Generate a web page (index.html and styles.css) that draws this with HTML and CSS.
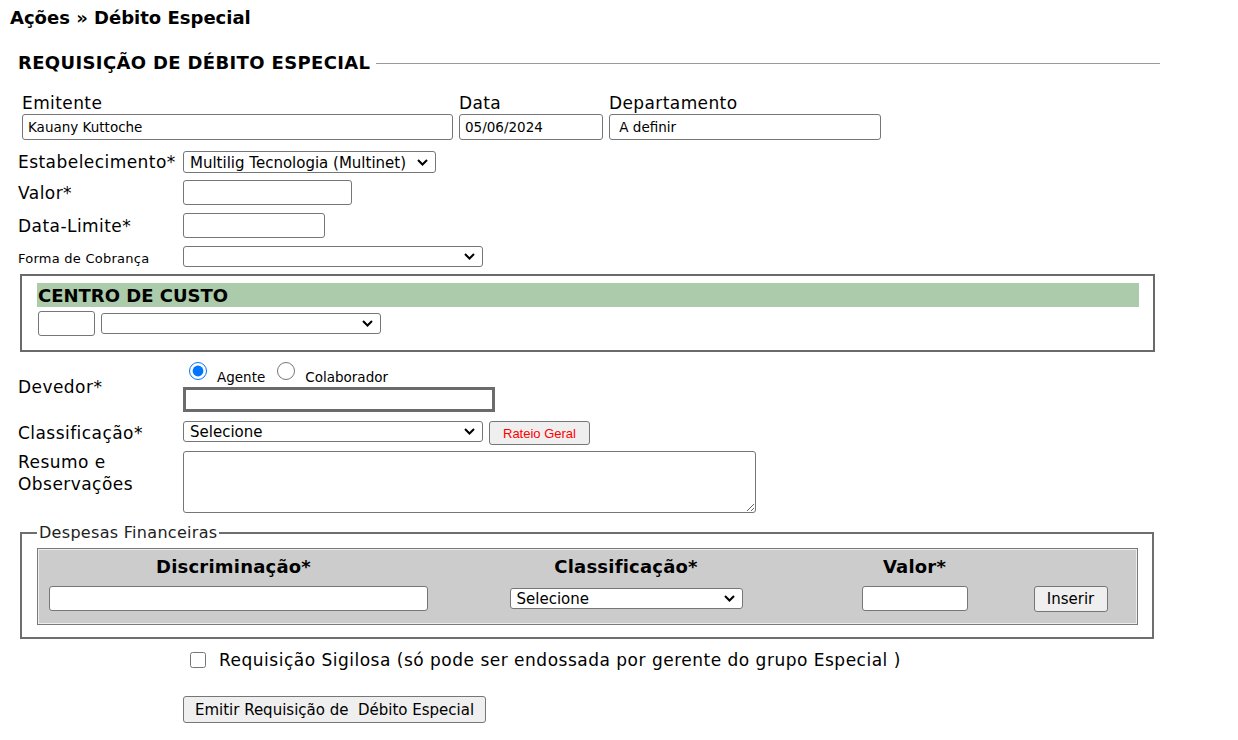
FILE: index.html
```html
<!DOCTYPE html>
<html lang="pt-BR">
<head>
    <meta charset="UTF-8">
    <title>Débito Especial</title>
    <link rel="stylesheet" href="styles.css">
</head>
<body>
    <h1 class="crumb">Ações » Débito Especial</h1>

    <form class="req">
        <div class="title-row">
            <h2>REQUISIÇÃO DE DÉBITO ESPECIAL</h2>
            <span class="rule"></span>
        </div>

        <div class="top-fields">
            <label class="field">
                <span>Emitente</span>
                <input type="text" class="in-emit" value="Kauany Kuttoche">
            </label>
            <label class="field">
                <span>Data</span>
                <input type="text" class="in-data" value="05/06/2024">
            </label>
            <label class="field">
                <span>Departamento</span>
                <input type="text" class="in-dep" value=" A definir">
            </label>
        </div>

        <div class="row row-estab">
            <span class="lbl">Estabelecimento*</span>
            <select class="sel sel-estab"><option>Multilig Tecnologia (Multinet)</option></select>
        </div>
        <div class="row row-valor">
            <span class="lbl">Valor*</span>
            <input type="text" class="in in-valor">
        </div>
        <div class="row row-dlim">
            <span class="lbl">Data-Limite*</span>
            <input type="text" class="in in-dlim">
        </div>
        <div class="row row-forma">
            <span class="lbl lbl-small">Forma de Cobrança</span>
            <select class="sel sel-forma"><option></option></select>
        </div>

        <div class="centro">
            <div class="centro-head">CENTRO DE CUSTO</div>
            <div class="centro-fields">
                <input type="text" class="in in-cc">
                <select class="sel sel-cc"><option></option></select>
            </div>
        </div>

        <div class="row row-devedor">
            <span class="lbl">Devedor*</span>
            <div class="devedor-box">
                <div class="radios">
                    <label><input type="radio" name="dev" checked> Agente</label>
                    <label><input type="radio" name="dev"> Colaborador</label>
                </div>
                <input type="text" class="in-devedor">
            </div>
        </div>

        <div class="row row-classif">
            <span class="lbl">Classificação*</span>
            <select class="sel sel-classif"><option>Selecione</option></select>
            <button type="button" class="btn-rateio">Rateio Geral</button>
        </div>

        <div class="row row-resumo">
            <span class="lbl">Resumo e<br>Observações</span>
            <textarea class="ta-resumo"></textarea>
        </div>

        <fieldset class="despesas">
            <legend>Despesas Financeiras</legend>
            <div class="desp-table">
                <div class="th">Discriminação*</div>
                <div class="th">Classificação*</div>
                <div class="th">Valor*</div>
                <div class="th"></div>
                <div class="td td-left"><input type="text" class="in in-disc"></div>
                <div class="td"><select class="sel sel-dclass"><option>Selecione</option></select></div>
                <div class="td"><input type="text" class="in in-dvalor"></div>
                <div class="td"><button type="button" class="btn btn-inserir">Inserir</button></div>
            </div>
        </fieldset>

        <div class="row row-sigilo">
            <span class="lbl"></span>
            <label class="sigilo"><input type="checkbox"> Requisição Sigilosa (só pode ser endossada por gerente do grupo Especial )</label>
        </div>

        <div class="row row-emitir">
            <span class="lbl"></span>
            <button type="button" class="btn btn-emitir">Emitir Requisição de &nbsp;Débito Especial</button>
        </div>
    </form>
</body>
</html>
```

FILE: styles.css
```css
body {
    margin: 0;
    padding: 8px 10px;
    font-family: 'DejaVu Sans', Verdana, sans-serif;
    color: #000;
    background: #fff;
}
.crumb {
    margin: 0;
    font-size: 18px;
    line-height: 20px;
    font-weight: bold;
}
.req {
    width: 1142px;
    margin-left: 8px;
}
.title-row {
    display: flex;
    align-items: center;
    margin-top: 25px;
    height: 20px;
}
.title-row h2 {
    margin: 0;
    font-size: 18px;
    line-height: 20px;
    font-weight: bold;
    letter-spacing: 0.35px;
    white-space: nowrap;
}
.rule {
    flex: 1;
    height: 1px;
    margin-left: 6px;
    background: #999;
}
.top-fields {
    display: flex;
    gap: 6px;
    margin-top: 20px;
    margin-left: 4px;
}
.field {
    display: flex;
    flex-direction: column;
    font-size: 17px;
    letter-spacing: 0.4px;
    line-height: 20px;
}
.field input {
    height: 26px;
    box-sizing: border-box;
    margin-top: 1px;
    padding: 0 5px;
    font-family: inherit;
    font-size: 13.5px;
    letter-spacing: 0;
    border: 1px solid #767676;
    border-radius: 3px;
}
.in-emit { width: 431px; }
.in-data { width: 144px; }
.in-dep { width: 272px; }

.row {
    display: flex;
    align-items: center;
}
.lbl {
    width: 165px;
    flex: none;
    font-size: 17px;
    letter-spacing: 0.45px;
    line-height: 22px;
}
.lbl-small {
    font-size: 13px;
    letter-spacing: 0.25px;
    padding-top: 5px;
}
.in, .sel {
    box-sizing: border-box;
    font-family: inherit;
    border: 1px solid #767676;
    border-radius: 3px;
    background-color: #fff;
    margin: 0;
}
.in {
    height: 25px;
    padding: 0 5px;
    font-size: 13px;
}
.sel {
    -webkit-appearance: none;
    appearance: none;
    height: 21px;
    padding: 2px 22px 0 6px;
    font-size: 15px;
    line-height: 17px;
    color: #000;
    background-image: url("data:image/svg+xml,%3Csvg xmlns='http://www.w3.org/2000/svg' width='11' height='7' viewBox='0 0 11 7'%3E%3Cpath d='M1 1l4.5 4.5L10 1' fill='none' stroke='%23000' stroke-width='2'/%3E%3C/svg%3E");
    background-repeat: no-repeat;
    background-position: right 7px center;
}
.row-estab { margin-top: 11px; height: 22px; }
.sel-estab { width: 253px; height: 22px; }
.row-valor { margin-top: 7px; height: 25px; }
.in-valor { width: 169px; }
.row-dlim { margin-top: 8px; height: 25px; }
.in-dlim { width: 142px; }
.row-forma { margin-top: 7px; height: 22px; }
.sel-forma { width: 300px; }

.centro {
    box-sizing: border-box;
    width: 1135px;
    height: 78px;
    margin: 7px 0 0 2px;
    padding: 7px 14px 0 15px;
    border: 2px solid #6a6a6a;
}
.centro-head {
    background: #abcbaa;
    height: 24px;
    line-height: 26px;
    font-size: 18px;
    font-weight: bold;
    padding-left: 1px;
}
.centro-fields {
    display: flex;
    align-items: center;
    gap: 6px;
    margin-top: 4px;
    padding-left: 1px;
}
.in-cc { width: 57px; }
.sel-cc { width: 280px; }

.row-devedor { margin-top: 10px; height: 50px; }
.devedor-box {
    display: flex;
    flex-direction: column;
}
.radios {
    display: flex;
    gap: 12px;
    height: 25px;
    align-items: center;
    font-size: 13.5px;
    margin-left: 6px;
    padding-top: 5px;
    box-sizing: border-box;
}
.radios label {
    display: flex;
    align-items: center;
    gap: 2px;
}
.radios input {
    width: 18px;
    height: 18px;
    margin: 0 8px 0 0;
    position: relative;
    top: -6px;
}
.in-devedor {
    box-sizing: border-box;
    width: 312px;
    height: 25px;
    margin: 0;
    border: 3px solid #6b6b6b;
    background: #fff;
}

.row-classif { margin-top: 9px; height: 24px; align-items: flex-start; }
.row-classif .lbl { line-height: 24px; }
.sel-classif { width: 300px; }
.btn-rateio {
    margin-left: 6px;
    height: 24px;
    width: 101px;
    padding: 0;
    font-family: 'Liberation Sans', Arial, sans-serif;
    font-size: 13px;
    color: #f00;
    background: #efefef;
    border: 1px solid #767676;
    border-radius: 3px;
}

.row-resumo { margin-top: 6px; align-items: flex-start; }
.row-resumo .lbl { line-height: 22px; }
.ta-resumo {
    box-sizing: border-box;
    width: 573px;
    height: 62px;
    margin: 0;
    border: 1px solid #767676;
    border-radius: 3px;
    font-family: inherit;
}

.despesas {
    box-sizing: border-box;
    width: 1134px;
    margin: 11px 0 0 2px;
    padding: 6px 14px 12px 15px;
    border: 2px solid #6e6e6e;
}
.despesas legend {
    padding: 0 2px;
    margin-left: 0;
    font-size: 16px;
    letter-spacing: 0.3px;
    line-height: 18px;
    color: #222;
}
.desp-table {
    display: grid;
    grid-template-columns: 389px 396px 181px 131px;
    grid-template-rows: 30px 43px;
    background: #ccc;
    border: 1px solid #7a7a7a;
    box-shadow: inset 0 0 0 1px #eee;
    padding: 1px;
}
.th {
    display: flex;
    align-items: center;
    justify-content: center;
    font-size: 18px;
    letter-spacing: 0.2px;
    font-weight: bold;
    padding-top: 2px;
}
.td {
    display: flex;
    align-items: center;
    justify-content: center;
    padding-bottom: 6px;
}
.td-left {
    justify-content: flex-start;
    padding-left: 10px;
}
.in-disc { width: 379px; }
.sel-dclass { width: 233px; }
.in-dvalor { width: 106px; }
.btn {
    box-sizing: border-box;
    margin: 0;
    font-family: inherit;
    font-size: 15px;
    background: #efefef;
    border: 1px solid #767676;
    border-radius: 3px;
    color: #000;
}
.btn-inserir {
    width: 74px;
    height: 26px;
    padding: 0;
}

.row-sigilo { margin-top: 10px; height: 22px; }
.sigilo {
    display: flex;
    align-items: center;
    font-size: 17px;
    letter-spacing: 0.5px;
    margin-left: 7px;
}
.sigilo input {
    width: 16px;
    height: 16px;
    margin: 0 13px 0 0;
}
.row-emitir { margin-top: 25px; }
.btn-emitir {
    height: 27px;
    width: 303px;
    padding: 0;
}
```
